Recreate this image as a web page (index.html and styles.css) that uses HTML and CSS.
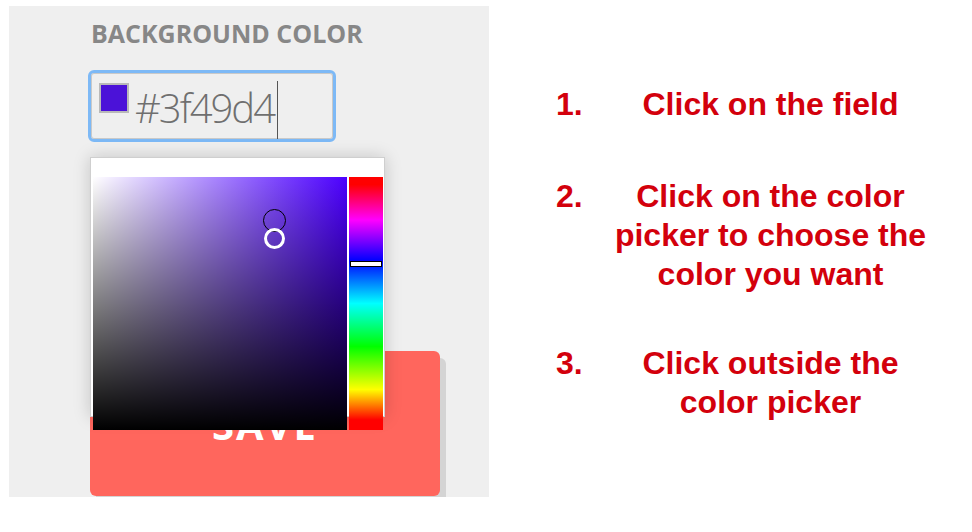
FILE: index.html
```html
<!DOCTYPE html>
<html>
<head>
<meta charset="utf-8">
<link rel="stylesheet" href="styles.css">
</head>
<body>
<div class="page">
  <section class="panel">
    <div class="label">BACKGROUND COLOR</div>
    <div class="field">
      <div class="input">
        <span class="swatch"></span>
        <span class="value">#3f49d4</span>
        <span class="caret"></span>
      </div>
      <div class="picker">
        <div class="picker-body">
          <div class="sat">
            <div class="sat-white"></div>
            <div class="sat-black"></div>
            <span class="ring ring-dark"></span>
            <span class="ring ring-light"></span>
          </div>
          <div class="hue">
            <span class="hue-marker"></span>
          </div>
        </div>
      </div>
    </div>
    <button class="save">SAVE</button>
  </section>
  <ol class="steps">
    <li class="step"><span class="num">1.</span><span class="text">Click on the field</span></li>
    <li class="step step-2"><span class="num">2.</span><span class="text">Click on the color picker to choose the color you want</span></li>
    <li class="step step-3"><span class="num">3.</span><span class="text">Click outside the color picker</span></li>
  </ol>
</div>
</body>
</html>
```
FILE: styles.css
```css
* { box-sizing: border-box; }
html, body { margin: 0; padding: 0; background: #ffffff; }
.page {
  display: flex;
  align-items: flex-start;
  width: 972px;
  height: 532px;
}
.panel {
  margin: 6px 0 0 9px;
  width: 480px;
  height: 491px;
  background: #efefef;
  padding: 12px 0 0 81px;
  overflow: hidden;
  display: flex;
  flex-direction: column;
  align-items: flex-start;
}
.label {
  font-family: "Open Sans", "Liberation Sans", sans-serif;
  font-weight: 700;
  font-size: 25px;
  line-height: 30px;
  color: #878787;
  margin-left: 1px;
}
.field {
  position: relative;
  margin: 22px 0 0 -2px;
}
.input {
  width: 248px;
  height: 72px;
  border: 3px solid #7db9f6;
  border-radius: 6px;
  box-shadow: inset 0 0 0 1px #c9c9c9;
  background: #efefef;
  display: flex;
  align-items: flex-start;
  padding: 10px 0 0 8px;
}
.swatch {
  width: 30px;
  height: 30px;
  background: #4b12d8;
  border: 2px solid #b9b9b9;
  flex: none;
}
.value {
  font-family: "Open Sans", "Liberation Sans", sans-serif;
  font-weight: 300;
  font-size: 40px;
  line-height: 50px;
  color: #6f6f6f;
  margin-left: 6px;
  letter-spacing: -2px;
}
.caret {
  width: 1px;
  height: 58px;
  background: #555;
  margin: -2px 0 0 3px;
}
.picker {
  position: absolute;
  top: calc(100% + 15px);
  left: 2px;
  width: 295px;
  height: 260px;
  background: #fff;
  border: 1px solid #cfcfcf;
  box-shadow: 0 0 16px rgba(0, 0, 0, 0.18);
  padding: 19px 1px 0 2px;
  z-index: 2;
}
.picker-body {
  display: flex;
  gap: 2px;
  height: 253px;
}
.sat {
  position: relative;
  width: 254px;
  height: 253px;
  background: #4c00ff;
}
.sat-white {
  position: absolute;
  inset: 0;
  background: linear-gradient(to right, #ffffff, rgba(255,255,255,0));
}
.sat-black {
  position: absolute;
  inset: 0;
  background: linear-gradient(to bottom, rgba(0,0,0,0), #000000);
}
.ring {
  position: absolute;
  border-radius: 50%;
}
.ring-dark {
  left: 170px;
  top: 32px;
  width: 23px;
  height: 23px;
  border: 1.5px solid #000;
}
.ring-light {
  left: 171px;
  top: 51px;
  width: 21px;
  height: 21px;
  border: 3px solid #ffffff;
}
.hue {
  position: relative;
  width: 34px;
  height: 253px;
  background: linear-gradient(to bottom,
    #ff0000 0%, #ff0000 3%, #ff00ff 17%, #0000ff 33%, #00ffff 50%,
    #00ff00 67%, #ffff00 84%, #ff0000 96%, #ff0000 100%);
}
.hue-marker {
  position: absolute;
  left: 1px;
  right: 1px;
  top: 84px;
  height: 6px;
  background: #fff;
  border: 1px solid #000;
}
.save {
  margin-top: 209px;
  width: 350px;
  height: 145px;
  flex: none;
  border: none;
  border-radius: 6px;
  background: #ff665d;
  box-shadow: 6px 7px 0 #d4d4d4;
  color: #fff;
  font-family: "Open Sans", "Liberation Sans", sans-serif;
  font-weight: 700;
  font-size: 40px;
  letter-spacing: 2px;
  padding: 2px 0 0 0;
}
.steps {
  list-style: none;
  margin: 85px 0 0 67px;
  padding: 0;
  font-family: "Liberation Sans", Arial, sans-serif;
  font-weight: 700;
  font-size: 32px;
  line-height: 39px;
  color: #d3000c;
}
.step {
  display: grid;
  grid-template-columns: 54px 321px;
}
.num { text-align: left; }
.text { text-align: center; }
.step-2 { margin-top: 53px; }
.step-3 { margin-top: 50px; }
```
